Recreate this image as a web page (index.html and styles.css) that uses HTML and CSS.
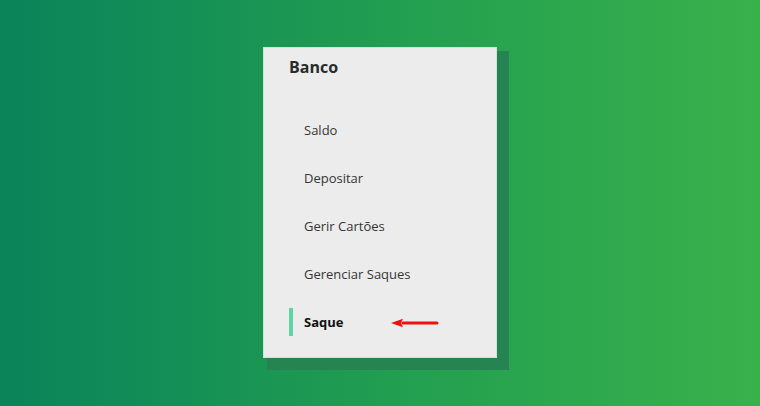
FILE: index.html
```html
<!DOCTYPE html>
<html lang="pt">
<head>
<meta charset="utf-8">
<title>Banco</title>
<link rel="stylesheet" href="styles.css">
</head>
<body>
<div class="page">
  <nav class="card">
    <h1 class="title">Banco</h1>
    <ul class="menu">
      <li class="item"><span class="label">Saldo</span></li>
      <li class="item"><span class="label">Depositar</span></li>
      <li class="item"><span class="label">Gerir Cartões</span></li>
      <li class="item"><span class="label">Gerenciar Saques</span></li>
      <li class="item active"><span class="label">Saque</span>
        <svg class="arrow" width="48" height="10" viewBox="0 0 48 10"><path d="M12 5 H46" stroke="#f01010" stroke-width="3" stroke-linecap="round"/><path d="M0 5 L12 0.8 L10 5 L12 9.2 Z" fill="#f01010"/></svg>
      </li>
    </ul>
  </nav>
</div>
</body>
</html>
```
FILE: styles.css
```css
html, body {
  margin: 0;
  padding: 0;
}
body {
  background: linear-gradient(90deg, #0a835a 0%, #23a050 55%, #39b14b 100%);
  font-family: "Open Sans", "Noto Sans", sans-serif;
  min-height: 100vh;
}
.page {
  min-height: 406px;
  display: flex;
  justify-content: center;
  align-items: flex-start;
  padding-top: 47px;
  box-sizing: border-box;
}
.card {
  width: 234px;
  height: 311px;
  box-sizing: border-box;
  background: #ebeceb;
  border: 1px solid #cfe3d6;
  box-shadow: 8px 8px 0 4px #268453;
  padding: 0 25px;
}
.title {
  margin: 0;
  height: 39px;
  line-height: 39px;
  font-size: 16px;
  font-weight: 700;
  color: #2a2a2a;
  margin-bottom: 19px;
}
.menu {
  list-style: none;
  margin: 0;
  padding: 0;
}
.item {
  height: 48px;
  display: flex;
  align-items: center;
  font-size: 13px;
  color: #353535;
}
.label {
  display: block;
  line-height: 28px;
  padding-left: 15px;
  border-left: 4px solid transparent;
  margin-left: -4px;
}
.item.active .label {
  margin-left: 0;
  padding-left: 11px;
  border-left-color: #5dd6a1;
  font-weight: 700;
  color: #111;
}
.arrow {
  margin-left: 48px;
  margin-top: 1px;
}
```
